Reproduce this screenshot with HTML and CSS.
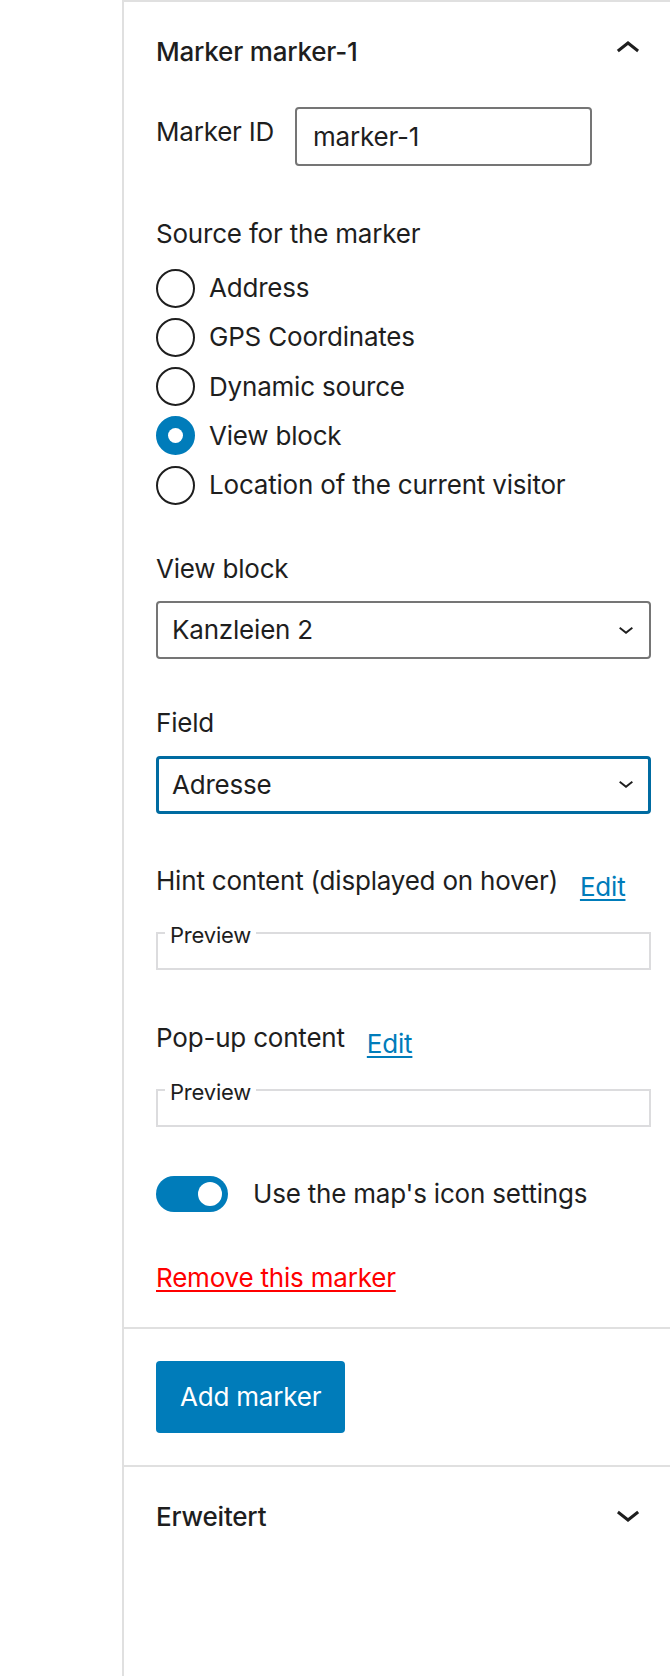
FILE: index.html
```html
<!DOCTYPE html>
<html lang="en">

<head>
    <meta charset="UTF-8">
    <meta name="viewport" content="width=device-width, initial-scale=1.0">
    <title>Map block settings</title>
    <link rel="stylesheet" href="styles.css">
</head>

<body>
    <div class="sidebar">
        <!-- marker panel, expanded -->
        <div class="panel">
            <h2 class="panel-header">
                <span class="panel-title">Marker marker-1</span>
                <svg class="panel-arrow" viewBox="0 0 24 24"><path d="M6.5 12.4L12 8l5.5 4.4-.9 1.2L12 10l-4.6 3.6-1-1.2z"/></svg>
            </h2>
            <div class="panel-body">
                <div class="field-row">
                    <label class="field-label inline-label" for="marker-id">Marker ID</label>
                    <input class="text-input" id="marker-id" type="text" value="marker-1">
                </div>

                <div class="field-label source-label">Source for the marker</div>
                <div class="radio-list">
                    <label class="radio-option"><span class="radio"></span>Address</label>
                    <label class="radio-option"><span class="radio"></span>GPS Coordinates</label>
                    <label class="radio-option"><span class="radio"></span>Dynamic source</label>
                    <label class="radio-option"><span class="radio is-checked"></span>View block</label>
                    <label class="radio-option"><span class="radio"></span>Location of the current visitor</label>
                </div>

                <div class="field-label block-label">View block</div>
                <div class="select">
                    <span>Kanzleien 2</span>
                    <svg class="select-arrow" viewBox="6.5 10.4 11 5.6"><path d="M17.5 11.6L12 16l-5.5-4.4.9-1.2L12 14l4.6-3.6 1 1.2z"/></svg>
                </div>

                <div class="field-label field-name-label">Field</div>
                <div class="select is-focused">
                    <span>Adresse</span>
                    <svg class="select-arrow" viewBox="6.5 10.4 11 5.6"><path d="M17.5 11.6L12 16l-5.5-4.4.9-1.2L12 14l4.6-3.6 1 1.2z"/></svg>
                </div>

                <div class="content-row hint-row">
                    <span>Hint content (displayed on hover)</span>
                    <a class="edit-link" href="#">Edit</a>
                </div>
                <fieldset class="preview">
                    <legend>Preview</legend>
                    <div class="preview-body"></div>
                </fieldset>

                <div class="content-row popup-row">
                    <span>Pop-up content</span>
                    <a class="edit-link" href="#">Edit</a>
                </div>
                <fieldset class="preview">
                    <legend>Preview</legend>
                    <div class="preview-body"></div>
                </fieldset>

                <div class="toggle-row">
                    <span class="toggle"></span>
                    <span>Use the map's icon settings</span>
                </div>

                <a class="remove-link" href="#">Remove this marker</a>
            </div>
        </div>

        <div class="panel actions">
            <button class="button" type="button">Add marker</button>
        </div>

        <!-- advanced panel, collapsed -->
        <div class="panel">
            <h2 class="panel-header">
                <span class="panel-title">Erweitert</span>
                <svg class="panel-arrow" viewBox="0 0 24 24"><path d="M17.5 11.6L12 16l-5.5-4.4.9-1.2L12 14l4.6-3.6 1 1.2z"/></svg>
            </h2>
        </div>
    </div>
</body>

</html>
```

FILE: styles.css
```css
* {
    box-sizing: border-box;
}

body {
    margin: 0;
    background: #fff;
    color: #1e1e1e;
    font-family: Inter, "Noto Sans", sans-serif;
    font-size: 26px;
    line-height: 36px;
    letter-spacing: -0.2px;
}

.sidebar {
    margin-left: 122px;
    min-height: 1676px;
    border-left: 2px solid #e0e0e0;
}

.panel {
    border-top: 2px solid #e0e0e0;
}

.panel-header {
    display: flex;
    align-items: center;
    justify-content: space-between;
    margin: 0;
    padding: 23px 18px 0 32px;
    font-size: 26px;
    font-weight: 500;
    line-height: 36px;
}

.panel-arrow {
    width: 48px;
    height: 48px;
    margin-bottom: 6px;
    fill: #1e1e1e;
}

.panel-body {
    padding: 28px 19px 30.5px 32px;
}

.field-label {
    display: block;
}

.field-row {
    display: flex;
    align-items: flex-start;
}

.inline-label {
    flex: none;
    width: 115px;
    margin: 7px 24px 0 0;
    white-space: nowrap;
}

.text-input {
    width: 297px;
    height: 59px;
    padding: 0 16px;
    border: 2px solid #757575;
    border-radius: 4px;
    color: #1e1e1e;
    font: inherit;
    letter-spacing: inherit;
}

/* radio group */
.source-label {
    margin-top: 49.5px;
}

.radio-list {
    display: flex;
    flex-direction: column;
    gap: 10.25px;
    margin-top: 17px;
}

.radio-option {
    display: flex;
    align-items: center;
    gap: 14px;
    height: 39px;
}

.radio {
    display: flex;
    align-items: center;
    justify-content: center;
    flex-shrink: 0;
    width: 39px;
    height: 39px;
    border: 2px solid #1e1e1e;
    border-radius: 50%;
}

.radio.is-checked {
    background: #007cba;
    border-color: #007cba;
}

.radio.is-checked::after {
    content: "";
    width: 15px;
    height: 15px;
    border-radius: 50%;
    background: #fff;
}

/* selects */
.block-label {
    margin-top: 46px;
}

.field-name-label {
    margin-top: 46.2px;
}

.select {
    display: flex;
    align-items: center;
    justify-content: space-between;
    height: 58px;
    margin-top: 14.5px;
    padding: 0 16px 0 14px;
    border: 2px solid #757575;
    border-radius: 4px;
}

.select.is-focused {
    padding: 0 15px 0 13px;
    border: 3px solid #006ba1;
}

.select-arrow {
    width: 14px;
    height: 7px;
    fill: #1e1e1e;
}

/* content previews */
.content-row {
    display: flex;
    align-items: flex-start;
    gap: 22px;
}

.hint-row {
    margin-top: 49.8px;
}

.popup-row {
    margin-top: 49.5px;
}

.edit-link {
    margin-top: 6px;
    color: #007cba;
    text-decoration-thickness: 2px;
    text-underline-offset: 3px;
}

.preview {
    min-width: 0;
    margin: 14px 0 0;
    padding: 0 7px;
    border: 2px solid #dcdcde;
}

.preview legend {
    padding: 4px 5px 0;
    font-size: 22px;
    line-height: 24px;
}

.preview-body {
    height: 21px;
}

/* toggle */
.toggle-row {
    display: flex;
    align-items: center;
    gap: 25px;
    margin-top: 49px;
}

.toggle {
    display: flex;
    align-items: center;
    justify-content: flex-end;
    width: 72px;
    height: 36px;
    padding-right: 6px;
    border-radius: 18px;
    background: #007cba;
}

.toggle::after {
    content: "";
    width: 24px;
    height: 24px;
    border-radius: 50%;
    background: #fff;
}

.remove-link {
    display: block;
    width: fit-content;
    margin-top: 48.5px;
    color: #f00;
    text-decoration-thickness: 2px;
    text-underline-offset: 3px;
}

/* add marker */
.actions {
    padding: 32px 0 32px 32px;
}

.button {
    height: 72px;
    padding: 0 24px;
    border: 0;
    border-radius: 4px;
    background: #007cba;
    color: #fff;
    font: inherit;
    letter-spacing: inherit;
    cursor: pointer;
}
```
